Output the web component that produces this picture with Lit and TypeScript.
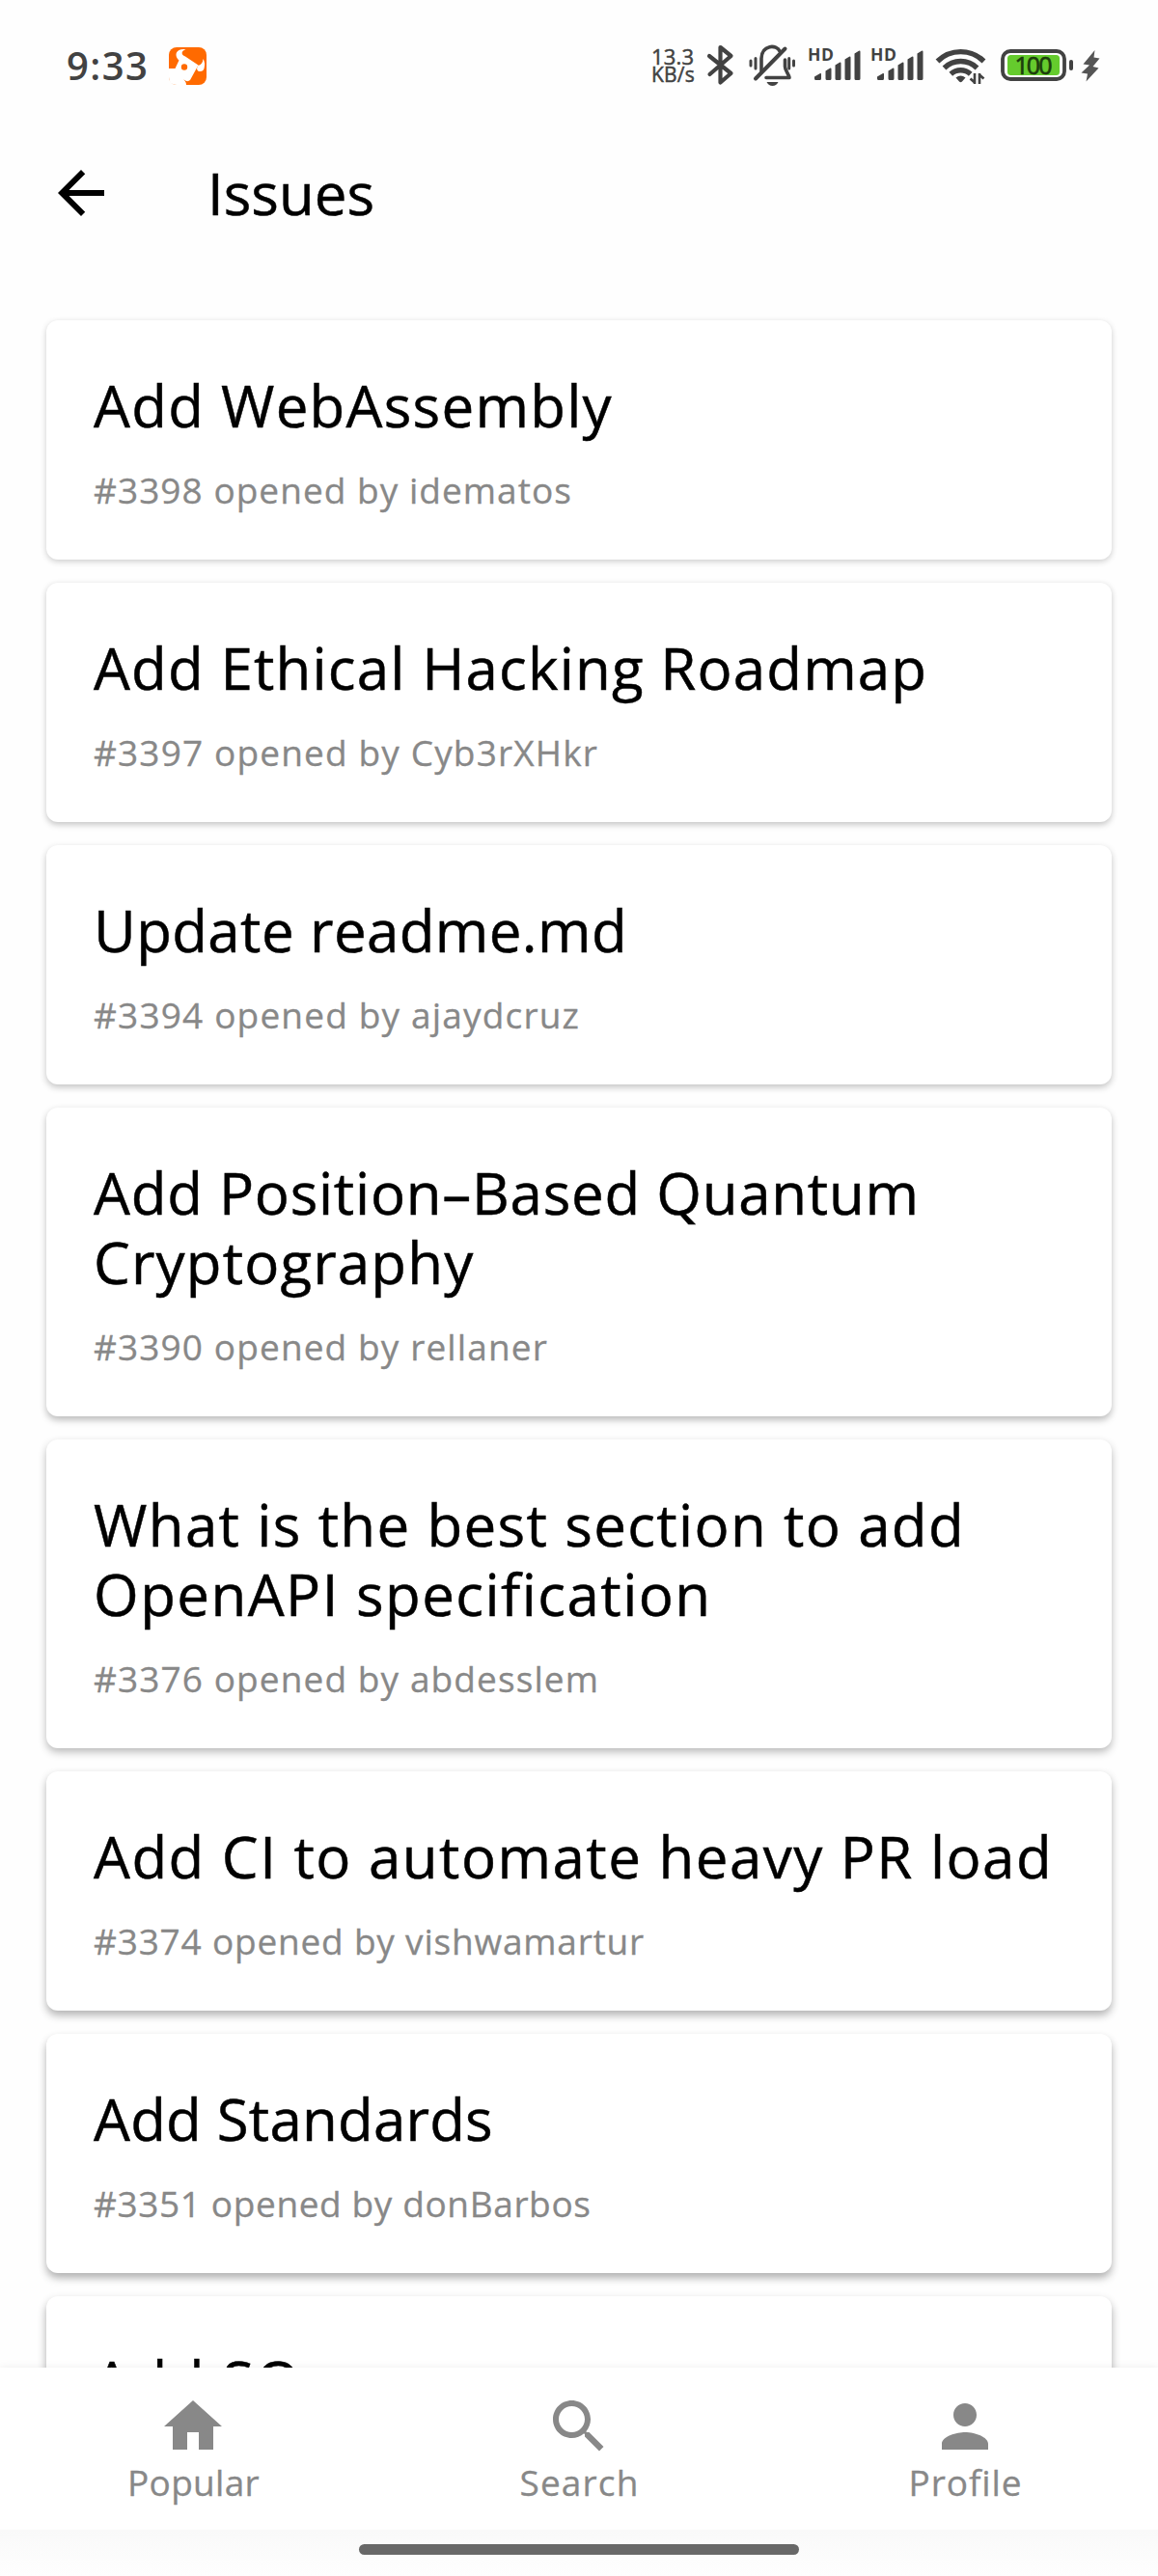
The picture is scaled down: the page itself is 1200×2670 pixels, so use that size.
import { LitElement, html, css, svg } from "lit";
import { customElement, property } from "lit/decorators.js";
import { styleMap } from "lit/directives/style-map.js";

interface Line {
  text: string;
  spacing: number;
}

interface Issue {
  title: Line[];
  meta: Line;
}

const issues: Issue[] = [
  {
    title: [{ text: "Add WebAssembly", spacing: 1.26 }],
    meta: { text: "#3398 opened by idematos", spacing: 1.04 },
  },
  {
    title: [{ text: "Add Ethical Hacking Roadmap", spacing: 1.15 }],
    meta: { text: "#3397 opened by Cyb3rXHkr", spacing: 1.15 },
  },
  {
    title: [{ text: "Update readme.md", spacing: 0.4 }],
    meta: { text: "#3394 opened by ajaydcruz", spacing: 1.17 },
  },
  {
    title: [
      { text: "Add Position–Based Quantum", spacing: 0.75 },
      { text: "Cryptography", spacing: 1.15 },
    ],
    meta: { text: "#3390 opened by rellaner", spacing: 1.12 },
  },
  {
    title: [
      { text: "What is the best section to add", spacing: 1.35 },
      { text: "OpenAPI specification", spacing: 1.46 },
    ],
    meta: { text: "#3376 opened by abdesslem", spacing: 1.1 },
  },
  {
    title: [{ text: "Add CI to automate heavy PR load", spacing: 1.48 }],
    meta: { text: "#3374 opened by vishwamartur", spacing: 0.8 },
  },
  {
    title: [{ text: "Add Standards", spacing: 0.2 }],
    meta: { text: "#3351 opened by donBarbos", spacing: 0.62 },
  },
  {
    title: [{ text: "Add SO", spacing: 1.6 }],
    meta: { text: "", spacing: 0 },
  },
];

const tabs = [
  { label: "Popular", spacing: 0.3, path: "M10 20v-6h4v6h5v-8h3L12 3 2 12h3v8z" },
  {
    label: "Search",
    spacing: 1.14,
    path: "M15.5 14h-.79l-.28-.27C15.41 12.59 16 11.11 16 9.5 16 5.91 13.09 3 9.5 3S3 5.91 3 9.5 5.91 16 9.5 16c1.61 0 3.09-.59 4.23-1.57l.27.28v.79l5 4.99L20.49 19l-4.99-5zm-6 0C7.01 14 5 11.99 5 9.5S7.01 5 9.5 5 14 7.01 14 9.5 11.99 14 9.5 14z",
  },
  {
    label: "Profile",
    spacing: 0.92,
    path: "M12 12c2.21 0 4-1.79 4-4s-1.79-4-4-4-4 1.79-4 4 1.79 4 4 4zm0 2c-2.67 0-8 1.34-8 4v2h16v-2c0-2.66-5.33-4-8-4z",
  },
];

@customElement("status-bar")
export class StatusBar extends LitElement {
  static styles = css`
    :host {
      display: flex;
      align-items: center;
      box-sizing: border-box;
      height: 136px;
      padding: 0 60px 0 69px;
      color: #424242;
      font-family: "Open Sans", "Noto Sans", sans-serif;
    }
    .time {
      width: 106px;
      font-size: 40px;
      line-height: 54px;
      font-weight: 600;
      letter-spacing: 1.4px;
      margin-top: -1px;
    }
    .app {
      width: 39px;
      height: 39px;
    }
    .speed {
      width: 55px;
      margin-left: auto;
      font-size: 22px;
      line-height: 19px;
      -webkit-text-stroke: 0.5px #424242;
      white-space: nowrap;
    }
    .rate {
      letter-spacing: 0.2px;
    }
    .unit {
      font-size: 21px;
      letter-spacing: 0.2px;
    }
    .icons {
      width: 410px;
      height: 60px;
      flex: none;
    }
    .hd {
      font-size: 17.5px;
      font-weight: 700;
      fill: #424242;
    }
    .level {
      font-size: 25px;
      fill: #1c3d0c;
      stroke: #1c3d0c;
      stroke-width: 0.7px;
    }
  `;

  private signal(x: number) {
    return svg`
      <g transform="translate(${x} 0)">
        <text class="hd" x="-1" y="25" textLength="27" lengthAdjust="spacing">HD</text>
        <path fill="#424242" d="M6 41.5l6-3.5q1-.4 1 .8v4.700q0 1.500-1.500 1.500h-4q-1.500 0-1.500-1.500z
          M17.500 35.500l4.500-2.800q1.500-.6 1.500 1v9.800q0 1.500-1.500 1.500h-3q-1.500 0-1.500-1.500z
          M27.500 29.500l4.500-2.800q1.500-.6 1.500 1v15.800q0 1.500-1.500 1.500h-3q-1.500 0-1.500-1.500z
          M37.500 23.500l4.500-2.800q1.500-.6 1.500 1v21.800q0 1.500-1.500 1.500h-3q-1.500 0-1.500-1.500z
          M47.500 17.500l4.500-2.800q1.500-.6 1.500 1v27.800q0 1.500-1.500 1.500h-3q-1.500 0-1.500-1.500z" />
      </g>`;
  }

  render() {
    return html`
      <span class="time">9:33</span>
      <svg class="app" viewBox="0 0 39 39">
        <rect width="39" height="39" rx="8" fill="#ff6a00" />
        <path fill="#fff" d="M0 22H6.500L10.500 13.500C6.500 10 6.500 5 10.500 3Q13.500 1.500 17.500 2.200C12.500 3.500 12.500 8 17 9.500L30.500 18.500L22 34Q20.500 35.500 18 35L14 32.500Q18 35 18 39H8Q0 39 0 31Z" />
        <path fill="#fff" d="M30 19Q35 18 35.500 12Q38 16 36.500 22Q35.500 25.500 31.500 25Q29.500 25 29 22Z" />
        <circle cx="16" cy="20.500" r="3.200" fill="#ff6a00" />
      </svg>
      <div class="speed">
        <div class="rate">13.3</div>
        <div class="unit">KB/s</div>
      </div>
      <svg class="icons" viewBox="0 0 410 60">
        <g fill="none" stroke="#424242" stroke-linecap="round" stroke-linejoin="round">
          <path stroke-width="4.200" d="M5 20L27.500 38 16.500 47.500V11L27.500 20 5.500 39" />
          <g stroke-width="3.600">
            <path d="M59 36V22.500C59.500 8 75 8 78 15" />
            <path d="M83.500 24V31C83.500 35 87 38 88 42.500H64" />
          </g>
          <path stroke-width="4" d="M53 43.500L83.500 12.500" />
          <path stroke-width="3" d="M48 25v5M53 22.500v10.500M87.700 22.500v10.500M92.500 25v5" />
        </g>
        <path fill="#424242" d="M64.500 47h12q-2 4-6 4t-6-4z" />
        ${this.signal(108)}${this.signal(173)}
        <g fill="none" stroke="#424242" stroke-width="5.400">
          <path d="M241.500 25.500A34 34 0 0 1 289.500 25.500" />
          <path d="M248.500 32.500A24.200 24.200 0 0 1 282.500 32.500" />
          <path d="M255.300 38.800A15 15 0 0 1 275.700 38.800" />
        </g>
        <path fill="#424242" d="M260.500 42.500Q265.500 38.500 270.500 42.500L267 46.500Q265.500 48 264 46.500Z" />
        <path fill="none" stroke="#424242" stroke-width="2.600" d="M280 38v11M280 47.500l-4.500-4M285 49V38M285 39.500l4.500 4" />
        <rect x="309" y="15" width="64" height="29" rx="8" fill="none" stroke="#424242" stroke-width="3.800" />
        <rect x="314" y="19" width="54" height="21" rx="3.500" fill="#65cb2d" />
        <rect x="378" y="24" width="4" height="11" rx="2" fill="#424242" />
        <text class="level" x="321.500" y="38.500" textLength="39" lengthAdjust="spacing">100</text>
        <path fill="#555" d="M404.500 14L392.500 28.500L399 29.500L390.500 37.500L397 38.500L395.500 46.500L408.500 32.500L402.500 31L409.500 22.500L403.500 21.500Z" />
      </svg>
    `;
  }
}

@customElement("issue-card")
export class IssueCard extends LitElement {
  @property({ attribute: false }) issue!: Issue;

  static styles = css`
    :host {
      display: block;
      box-sizing: border-box;
      min-height: 248px;
      flex: none;
      padding: 52px 0 50px 49px;
      border-radius: 12px;
      background: #fff;
      white-space: nowrap;
    }
    .title {
      font-size: 60px;
      line-height: 72px;
      color: #000;
      -webkit-text-stroke: 0.5px #000;
    }
    .meta {
      margin-top: 30px;
      font-size: 37px;
      line-height: 44px;
      color: #888;
      -webkit-text-stroke: 0.3px #888;
    }
  `;

  render() {
    const { title, meta } = this.issue;
    return html`
      ${title.map(
        (l) => html`<div class="title" style=${styleMap({ letterSpacing: `${l.spacing}px` })}>${l.text}</div>`,
      )}
      <div class="meta" style=${styleMap({ letterSpacing: `${meta.spacing}px` })}>${meta.text}</div>
    `;
  }
}

@customElement("app-root")
export class AppRoot extends LitElement {
  static styles = css`
    :host {
      display: flex;
      flex-direction: column;
      width: 1200px;
      height: 2670px;
      overflow: hidden;
      background: #fefefe;
      color: #000;
      font-family: "Open Sans", "Noto Sans", sans-serif;
    }
    .toolbar {
      display: flex;
      align-items: center;
      gap: 95px;
      height: 128px;
      padding-left: 48px;
      flex: none;
    }
    .back {
      width: 72px;
      height: 72px;
    }
    .heading {
      margin: 0;
      font-size: 60px;
      line-height: 72px;
      font-weight: 400;
      -webkit-text-stroke: 0.5px #000;
    }
    .list {
      display: flex;
      flex-direction: column;
      gap: 24px;
      flex: 1;
      min-height: 0;
      padding: 68px 48px 0;
      overflow: hidden;
    }
    .nav {
      display: grid;
      grid-template-columns: repeat(3, 1fr);
      box-sizing: border-box;
      height: 168px;
      flex: none;
      padding-top: 25px;
      position: relative;
      background: #fff;
      box-shadow: 0 0 8px rgba(0, 0, 0, 0.07);
      color: #888;
    }
    .tab {
      display: flex;
      flex-direction: column;
      align-items: center;
      font-size: 37px;
      line-height: 44px;
      -webkit-text-stroke: 0.3px #888;
    }
    .tab-icon {
      width: 72px;
      height: 72px;
      fill: #888;
    }
    .label {
      padding-left: 1px;
    }
    .gesture {
      display: flex;
      justify-content: center;
      box-sizing: border-box;
      height: 48px;
      flex: none;
      padding-top: 15px;
      position: relative;
      background: linear-gradient(#f9f9f9, #fefefe);
    }
    .pill {
      width: 456px;
      height: 11px;
      border-radius: 6px;
      background: #686868;
    }
  `;

  /* Cards lower on the screen cast a longer and darker shadow. */
  private shadow(i: number) {
    const y = 2 + i * 0.5;
    const blur = 6 + i * 0.5;
    const alpha = 0.2 + i * 0.018;
    return `0 ${y}px ${blur}px rgba(0,0,0,${alpha.toFixed(3)})`;
  }

  render() {
    return html`
      <status-bar></status-bar>
      <header class="toolbar">
        <svg class="back" viewBox="0 0 24 24">
          <path d="M20 11H7.830l5.590-5.590L12 4l-8 8 8 8 1.410-1.410L7.830 13H20v-2z" />
        </svg>
        <h1 class="heading">Issues</h1>
      </header>
      <main class="list">
        ${issues.map(
          (issue, i) => html`<issue-card .issue=${issue} style=${styleMap({ boxShadow: this.shadow(i) })}></issue-card>`,
        )}
      </main>
      <nav class="nav">
        ${tabs.map(
          (t) => html`
            <div class="tab">
              <svg class="tab-icon" viewBox="0 0 24 24"><path d=${t.path} /></svg>
              <span class="label" style=${styleMap({ letterSpacing: `${t.spacing}px` })}>${t.label}</span>
            </div>
          `,
        )}
      </nav>
      <footer class="gesture"><div class="pill"></div></footer>
    `;
  }
}
